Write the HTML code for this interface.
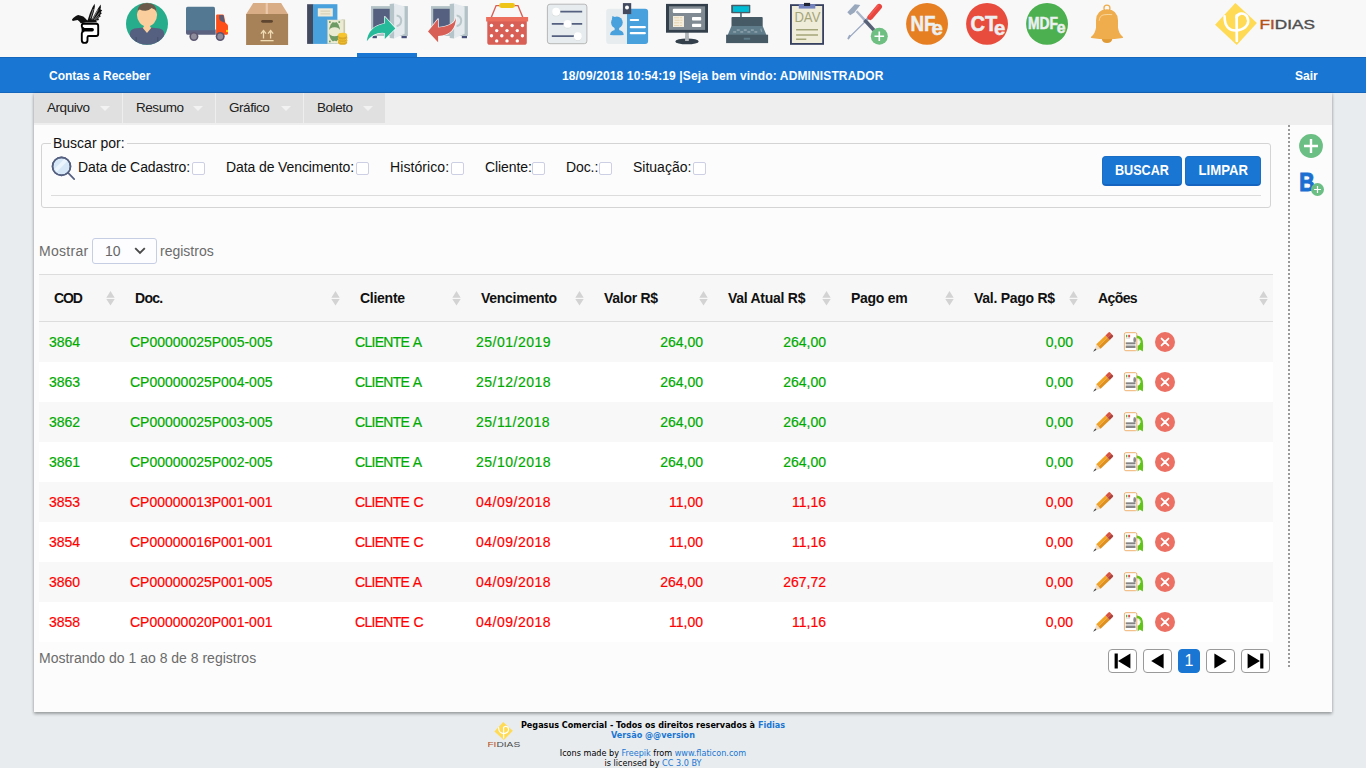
<!DOCTYPE html>
<html lang="pt-br">
<head>
<meta charset="utf-8">
<title>Contas a Receber</title>
<style>
*{box-sizing:border-box}
html,body{margin:0;padding:0}
body{width:1366px;height:768px;overflow:hidden;position:relative;background:#e8ecef;
  font-family:"Liberation Sans",sans-serif;font-size:14px;color:#111}
a{text-decoration:none;color:#1976d2}

/* ---------- top toolbar ---------- */
#toolbar{position:absolute;left:0;top:0;width:1366px;height:57px;background:#f8f8f8}
#toolbar .ic{position:absolute;top:0;width:60px;height:57px}
#toolbar .ic svg{position:absolute;left:0;top:0;width:60px;height:57px}
#toolbar .ic.active:after{content:"";position:absolute;left:0;right:0;bottom:0;height:4px;background:#1976d2}
#brand{position:absolute;left:1206px;top:0;width:120px;height:57px}
#brand svg{position:absolute;left:0;top:0;width:120px;height:57px}

/* ---------- blue title bar ---------- */
#titlebar{position:absolute;left:0;top:57px;width:1366px;height:36px;background:#1976d2;color:#fff;
  font-weight:bold;font-size:12px;line-height:36px;box-shadow:inset 0 1px 0 #1567be,inset 0 -1px 0 #1567be}
#titlebar span{position:absolute;top:1px;white-space:nowrap}
#tb-left{left:49px}
#tb-mid{left:562px;letter-spacing:.13px}
#tb-right{left:1295px}

/* ---------- main panel ---------- */
#panel{position:absolute;left:34px;top:93px;width:1298px;height:619px;background:#fcfcfc;
  box-shadow:0 2px 3px rgba(0,0,0,.3),0 0 3px rgba(0,0,0,.14)}
#menubar{position:absolute;left:0;top:0;width:1298px;height:32px;background:#eeeeee}
#menubar .mi{position:absolute;top:0;height:30px;background:#e0e0e0;line-height:29px;color:#212121;font-size:13.5px;letter-spacing:-.45px;padding-left:13px;white-space:nowrap}
#menubar .mi i{position:absolute;top:13px;width:0;height:0;border-left:5px solid transparent;border-right:5px solid transparent;border-top:5px solid #f2f2f2}

/* ---------- search fieldset ---------- */
#busca{position:absolute;left:7px;top:50px;width:1230px;height:65px;margin:0;padding:0;border:1px solid #d4d4d4;border-radius:3px}
#busca legend{position:absolute;left:9px;top:-9px;padding:0 2px;background:#fcfcfc;font-size:14px;line-height:16px;color:#111;white-space:nowrap}
#busca .lb{position:absolute;top:15px;line-height:16px;white-space:nowrap;color:#111;letter-spacing:-.1px}
#busca .cb{position:absolute;top:18px;width:13px;height:13px;border:1px solid #cdd0e4;border-radius:2px;background:#fff}
#busca hr{position:absolute;left:9px;top:51px;width:1210px;height:0;margin:0;border:0;border-top:1px solid #dcdcdc}
.btn{position:absolute;top:12px;height:30px;background:#1976d2;color:#fff;font-weight:bold;font-size:14px;line-height:26px;text-align:center;border-radius:4px;border:1px solid #1a6fc4;border-bottom:2px solid #1565c0;white-space:nowrap}

/* ---------- side tools ---------- */
#vline{position:absolute;left:1254px;top:32px;width:0;height:542px;border-left:2px dotted #9a9a9a}
#side-add{position:absolute;left:1265px;top:41px;width:24px;height:24px}
#side-b{position:absolute;left:1264px;top:76px;width:28px;height:28px}

/* ---------- length / info ---------- */
.gray{color:#6b6b6b}
#len{position:absolute;left:5px;top:145px;width:300px;height:26px;line-height:26px;white-space:nowrap}
#len b{position:absolute;top:0;font-weight:normal}
#len .sel{position:absolute;left:53px;top:0;width:65px;height:26px;border:1px solid #c6cee4;border-radius:3px;background:#fdfdff;line-height:24px;padding-left:12px;color:#666}
#info{position:absolute;left:5px;top:556px;line-height:18px;white-space:nowrap}

/* ---------- data table ---------- */
#grid{position:absolute;left:5px;top:181px;width:1234px;border-collapse:collapse;table-layout:fixed;font-size:14px}
#grid th{height:47px;font-size:14px;letter-spacing:-.27px;padding:0 0 0 15px;text-align:left;font-weight:bold;color:#111;background:#f7f7f7;border-top:1px solid #dddddd;border-bottom:1px solid #dddddd;position:relative;white-space:nowrap}
#grid td{height:40px;padding:1px 10px 0;white-space:nowrap;overflow:hidden}
#grid tr.odd td{background:#f8f8f8}
#grid tr.even td{background:#fff}
#grid td.r{text-align:right}
#grid td{-webkit-text-stroke:.2px currentColor}
#grid td:nth-child(3){letter-spacing:-.72px;word-spacing:1.2px}
#grid td:nth-child(4){letter-spacing:.5px}
#grid tr.g td{color:#00aa00}
#grid tr.v td{color:#ff0000}
#grid td.a{padding:0 0 0 7px}
#grid td.a svg{display:block;width:90px;height:24px}
#grid th .s{position:absolute;right:5px;top:16px;width:9px;height:15px}

/* ---------- pagination ---------- */
.pg{position:absolute;top:556px;height:24px;border:1px solid #9a9a9a;border-radius:4px;background:#fff}
.pg.cur{border-color:#1976d2;background:#1976d2;color:#fff;text-align:center;line-height:22px;font-size:16px}

/* ---------- footer ---------- */
.ft{position:absolute;left:403px;width:500px;text-align:center;font-family:"DejaVu Sans Condensed","DejaVu Sans",sans-serif;font-size:9px;line-height:10px;color:#000;white-space:nowrap}
#footer{top:720px}
#footer2{top:748px}
.ft b{font-weight:bold}
#flogo{position:absolute;left:484px;top:719px;width:40px;height:32px}
#flogo svg{display:block;width:40px;height:32px}
.btn span{display:inline-block;transform-origin:50% 50%}
#grid th:nth-child(1){letter-spacing:-1.1px}
#grid th:nth-child(2){letter-spacing:-.7px}
#grid th:nth-child(9){letter-spacing:-.6px}
</style>
</head>
<body>

<div id="toolbar">
  <div class="ic" style="left:57px"><svg viewBox="0 0 60 57"><path d="M14.9 19.8 L16.2 18 L18.9 16 L21.1 14.9 L23 15.5 L26.3 16.5 L28.5 18.4 L30.3 20.4 L30.9 19.4 L32.9 13.2 L35.6 7 L37.6 3.7 L37.9 6.6 L36.9 11.4 L35.2 17 L34.5 19.6 L35.2 18.8 L37.8 14 L41.3 7.9 L43.7 4.6 L43.9 7.5 L43.4 9.2 L45.2 10.4 L43.7 11.9 L44.8 13.2 L43 14.9 L43.7 16.5 L41.3 18 L42 20 L38.8 20.8 L40.4 22.2 L35 22.4 L29 22.4 L23.7 23.2 L22.4 21.5 L20.6 20 L18 20.4 L15.8 20.9 Z" fill="#111"/><path d="M33.2 18.4 L36.4 9 M35.6 19.4 L41.2 9.6 M37.2 19.8 L42.6 12.6 M38.6 19.8 L42.2 16" stroke="#f8f8f8" stroke-width=".45" fill="none"/><path d="M26.4 23.7 H39.2 Q41.2 23.7 41.2 25.7 V34 Q41.2 36 39.2 36 H31.8 Q30.5 36 30.5 37.3 V40.2 Q30.5 42.9 27.8 42.9 H27.5 Q24.8 42.9 24.8 40.2 V33.6 Q24.8 31.7 26.4 31.4 V28.2 Q24.8 27.9 24.8 26.3 V25.7 Q24.8 23.7 26.4 23.7 Z" fill="#fff" stroke="#000" stroke-width="1.9" stroke-linejoin="round"/><path d="M24.6 27.9 H35.2 Q36.9 27.9 36.9 29.7 Q36.9 31.5 35.2 31.5 H24.6 Z" fill="#000"/></svg></div>
  <div class="ic" style="left:117px"><svg viewBox="0 0 60 57"><defs><clipPath id="c2"><circle cx="30" cy="23.8" r="21"/></clipPath></defs><circle cx="30" cy="23.8" r="21" fill="#26ad8b"/><g clip-path="url(#c2)"><path d="M13 46 V33.5 Q13 29.5 17.5 28.6 L26.5 27.6 H33.5 L42.5 28.6 Q47 29.5 47 33.5 V46 Z" fill="#556080"/><path d="M19.2 37 V46 M40.8 37 V46" stroke="#48516f" stroke-width="1.3"/><path d="M26.8 22 H33.2 V27 L34.4 27.7 L30 33 L25.6 27.7 L26.8 27 Z" fill="#fbce9d"/><ellipse cx="30" cy="14.8" rx="10.1" ry="11.6" fill="#fbce9d"/><path d="M20.2 12.4 Q20.6 3 30 3 Q39.4 3 39.8 12.4 Q38.6 9.4 34.6 8 Q32 10.6 28.6 10.8 Q24.6 10.8 22.6 9.4 Q20.8 10.4 20.2 12.4 Z" fill="#6b5b4b"/></g></svg></div>
  <div class="ic" style="left:177px"><svg viewBox="0 0 60 57"><path d="M9 29.6 H38.7 V34.7 H10.6 Q9 34.7 9 33.1 Z" fill="#5b6280"/><path d="M10.6 6.8 H36.4 Q38 6.8 38 8.4 V30.2 H9 V8.4 Q9 6.8 10.6 6.8 Z" fill="#527892"/><path d="M39.1 15.6 Q39.1 14.5 40.2 14.5 H45.6 Q46.7 14.5 47 15.6 L48.3 22.4 L50.3 24.6 Q51 25.4 51 26.4 V33.6 Q51 34.7 49.9 34.7 H39.1 Z" fill="#ff4f19"/><path d="M42.2 15 H45.6 Q46.4 15 46.6 15.8 L47.9 22.8 L44.2 21.2 Q42.2 20.4 42.2 18.6 Z" fill="#5d5a73"/><rect x="49" y="29.9" width="2" height="2.2" fill="#ffcf00"/><circle cx="16.9" cy="36.5" r="4.5" fill="#5b5670"/><circle cx="16.9" cy="36.5" r="2.9" fill="#8f8c9c"/><circle cx="43.2" cy="36.5" r="4.5" fill="#5b5670"/><circle cx="43.2" cy="36.5" r="2.9" fill="#8f8c9c"/></svg></div>
  <div class="ic" style="left:237px"><svg viewBox="0 0 60 57"><path d="M16.2 3.1 H44.1 L51.1 14.2 H9.1 Z" fill="#d9ae86"/><rect x="28.7" y="3.1" width="2.2" height="11.6" fill="#ecc9aa"/><rect x="9.1" y="14" width="42" height="31" fill="#a78157"/><rect x="24.2" y="20" width="11.7" height="2.7" rx="1.35" fill="#5f4630"/><path d="M26.5 30.6 V38.5 M33.6 30.6 V38.5" stroke="#f0dcb4" stroke-width="1.3" fill="none"/><path d="M23.9 33.6 L26.5 30.5 L29.1 33.6 M31 33.6 L33.6 30.5 L36.2 33.6" stroke="#f0dcb4" stroke-width="1.3" fill="none" stroke-linejoin="miter"/><rect x="23.5" y="40" width="13.1" height="1.3" fill="#f0dcb4"/></svg></div>
  <div class="ic" style="left:297px"><svg viewBox="0 0 60 57"><rect x="10.1" y="4.2" width="6.2" height="39.7" fill="#424a60"/><rect x="16" y="4.2" width="24.4" height="39.7" fill="#48a0dc"/><rect x="20.8" y="8.3" width="15" height="8.2" fill="#efe9d8"/><path d="M23.5 11.2 H33.2 M23.5 13.8 H33.2" stroke="#d9d2b9" stroke-width="1.3"/><rect x="44.6" y="19.5" width="3.5" height="23.6" fill="#c9c8a9"/><rect x="30.7" y="20" width="15.9" height="23.6" fill="#ebebd3" stroke="#d4d4ba" stroke-width=".5"/><ellipse cx="37.6" cy="31.7" rx="5.5" ry="10.3" fill="#6e9a64"/><ellipse cx="37.6" cy="31.7" rx="6" ry="4.5" fill="#ebebd3"/><ellipse cx="37.6" cy="21.4" rx="1.5" ry="1.2" fill="#ebebd3"/><ellipse cx="37.6" cy="42" rx="1.5" ry="1.2" fill="#ebebd3"/><rect x="32" y="21.2" width="1.7" height="1.7" fill="#6e9a64"/><rect x="41.4" y="21.2" width="1.7" height="1.7" fill="#6e9a64"/><rect x="32" y="40.6" width="1.7" height="1.7" fill="#6e9a64"/><path d="M41.1 35.1 V42.4 A4.5 2.4 0 0 0 50.1 42.4 V35.1 Z" fill="#dba926"/><path d="M41.1 37.6 A4.5 2.4 0 0 0 50.1 37.6 M41.1 40 A4.5 2.4 0 0 0 50.1 40" stroke="#f4c233" stroke-width="1" fill="none"/><ellipse cx="45.6" cy="35.1" rx="4.5" ry="2.4" fill="#f6c42f"/></svg></div>
  <div class="ic active" style="left:357px"><svg viewBox="0 0 60 57"><rect x="15.5" y="36" width="4.4" height="2.2" fill="#47507a"/><rect x="44.5" y="36" width="5.3" height="2.2" fill="#47507a"/><rect x="14" y="6.1" width="36.9" height="29.9" fill="#b3c2c6"/><rect x="16.2" y="8.8" width="17" height="24.6" fill="#556080"/><path d="M32.7 4 L37.1 3.5 V38.6 L32.7 37.9 Z" fill="#b5c4c8"/><path d="M37.1 3.5 L47.6 6.6 V33.8 L37.1 38.6 Z" fill="#e4eaed"/><path d="M39.6 15.4 Q44.2 16 44.2 20.6 Q44.2 25.4 39.6 26.2" stroke="#b9c7cb" stroke-width="2" fill="none"/><path d="M9.8 41.3 Q11.5 26.5 27.8 23.6 V16.7 L38.4 28.5 L27.8 39.1 V33 Q17 31.6 9.8 41.3 Z" fill="#26b99a" stroke="#f8f8f8" stroke-width="1.4" stroke-linejoin="round" paint-order="stroke"/></svg></div>
  <div class="ic" style="left:417px"><svg viewBox="0 0 60 57"><rect x="44.8" y="36" width="5.2" height="2.2" fill="#47507a"/><rect x="14" y="6.1" width="36.9" height="29.9" fill="#b3c2c6"/><rect x="16.2" y="8.8" width="17" height="24.6" fill="#556080"/><path d="M32.7 4 L37.1 3.5 V38.6 L32.7 37.9 Z" fill="#b5c4c8"/><path d="M37.1 3.5 L47.6 6.6 V33.8 L37.1 38.6 Z" fill="#e4eaed"/><path d="M39.6 15.4 Q44.2 16 44.2 20.6 Q44.2 25.4 39.6 26.2" stroke="#b9c7cb" stroke-width="2" fill="none"/><path d="M39.1 17.1 Q38.2 26 21.1 27.6 V18.9 L11 31.6 L21.1 42.2 V36 Q38.6 35.6 39.1 17.1 Z" fill="#d75f56" stroke="#f8f8f8" stroke-width="1.4" stroke-linejoin="round" paint-order="stroke"/></svg></div>
  <div class="ic" style="left:477px"><svg viewBox="0 0 60 57"><path d="M13.4 19.4 L19.1 5.6 H41 L46.7 19.4" stroke="#d75f56" stroke-width="1.4" fill="none"/><rect x="22.1" y="3.1" width="15.9" height="4.8" rx="2.4" fill="#efc419"/><path d="M10.3 21 H49.8 V42.2 Q49.8 44.8 47.2 44.8 H12.9 Q10.3 44.8 10.3 42.2 Z" fill="#d75f56"/><rect x="9.1" y="17" width="42" height="4.5" fill="#ec6f5e"/><g fill="#fff"><circle cx="14.5" cy="25.5" r="1.7"/><circle cx="24.8" cy="25.5" r="1.7"/><circle cx="35.1" cy="25.5" r="1.7"/><circle cx="45.4" cy="25.5" r="1.7"/><circle cx="19.7" cy="30.6" r="1.7"/><circle cx="30" cy="30.6" r="1.7"/><circle cx="40.3" cy="30.6" r="1.7"/><circle cx="14.5" cy="35.8" r="1.7"/><circle cx="24.8" cy="35.8" r="1.7"/><circle cx="35.1" cy="35.8" r="1.7"/><circle cx="45.4" cy="35.8" r="1.7"/><circle cx="19.7" cy="40.9" r="1.7"/><circle cx="30" cy="40.9" r="1.7"/><circle cx="40.3" cy="40.9" r="1.7"/></g></svg></div>
  <div class="ic" style="left:537px"><svg viewBox="0 0 60 57"><rect x="10.4" y="4.2" width="39.5" height="39.5" rx="2.6" fill="#e7edee" stroke="#b0b0b0" stroke-width=".9"/><path d="M23.3 11.7 H45.2 M14.8 23.9 H45.2 M14.8 36.2 H36.9" stroke="#556080" stroke-width="1.8"/><g fill="#d6d9da"><circle cx="19.1" cy="12.4" r="3.95"/><circle cx="30.6" cy="24.5" r="3.95"/><circle cx="40.85" cy="36.8" r="3.95"/></g><g fill="#fff"><circle cx="19.1" cy="11.8" r="3.95"/><circle cx="30.6" cy="23.9" r="3.95"/><circle cx="40.85" cy="36.2" r="3.95"/></g></svg></div>
  <div class="ic" style="left:597px"><svg viewBox="0 0 60 57"><path d="M12.1 8.8 H30 V43.9 H12.1 Q9.1 43.9 9.1 40.9 V11.8 Q9.1 8.8 12.1 8.8 Z" fill="#e7edee"/><path d="M30 8.8 H48.1 Q51.1 8.8 51.1 11.8 V40.9 Q51.1 43.9 48.1 43.9 H30 Z" fill="#48a0dc"/><rect x="25.9" y="3.1" width="8.3" height="11" fill="#424a60"/><circle cx="30" cy="7.5" r="2" fill="#fff"/><g fill="#48a0dc"><ellipse cx="19.9" cy="22.5" rx="5.8" ry="6.1"/><path d="M14.9 19.4 L15.4 16 L19 17.4 Z"/><rect x="17.6" y="27" width="4.6" height="4"/><path d="M13.1 34.9 Q13.1 30 19.9 30 Q26.7 30 26.7 34.9 Q19.9 35.6 13.1 34.9 Z"/></g><path d="M33.8 20 H41.1 M33.8 27.2 H47.8 M33.8 33.2 H47.8" stroke="#fff" stroke-width="2.2" stroke-linecap="round"/></svg></div>
  <div class="ic" style="left:657px"><svg viewBox="0 0 60 57"><rect x="28.1" y="32" width="3.7" height="9.6" fill="#b0b5b9"/><ellipse cx="30" cy="41.4" rx="11.7" ry="2.95" fill="#333f4a"/><rect x="28.1" y="36" width="3.7" height="5" fill="#b0b5b9"/><rect x="9" y="3.9" width="42" height="28.8" fill="#333f4a"/><rect x="12" y="6.3" width="36.1" height="23.6" fill="#7f8a92"/><rect x="15.8" y="8.8" width="28.4" height="4.2" rx="1" fill="#fff"/><rect x="16" y="16" width="11" height="11" fill="#f4ecdc"/><path d="M17 17.7 H26 M17.6 20.3 H25.4 M17 22.8 H26 M17 25.5 H26" stroke="#e0cba0" stroke-width=".7" stroke-dasharray="5 .8 2.2 1"/><rect x="35" y="17.1" width="9.2" height="3.5" rx=".8" fill="#fff"/><rect x="35" y="23.7" width="9.2" height="3.4" rx=".8" fill="#fff"/></svg></div>
  <div class="ic" style="left:717px"><svg viewBox="0 0 60 57"><rect x="23" y="12.6" width="1.9" height="5" fill="#607d8b"/><rect x="14.2" y="4.8" width="19.1" height="8.4" rx=".8" fill="#4a5a65"/><rect x="16" y="6.2" width="16.1" height="5.7" fill="#00bcd4"/><path d="M15.3 17.1 H44.9 Q45.7 17.1 45.7 17.9 V26.2 H14.5 V17.9 Q14.5 17.1 15.3 17.1 Z" fill="#465a65"/><path d="M14.5 25.9 H45.7 L49.4 35.1 H10.7 Z" fill="#5f7c8a"/><g fill="#8fa3ad"><rect x="16.2" y="31.2" width="2.9" height="1.5"/><rect x="19.8" y="29.3" width="2.9" height="1.5"/><rect x="23.3" y="31.2" width="2.9" height="1.5"/><rect x="26.8" y="29.3" width="2.9" height="1.5"/><rect x="30.4" y="31.2" width="2.9" height="1.5"/><rect x="33.9" y="29.3" width="2.9" height="1.5"/><rect x="37.4" y="31.2" width="2.9" height="1.5"/><path d="M43.2 28.8 L44.4 28.6 L45.3 31.6 L44.1 31.9 Z"/></g><rect x="9.1" y="34.7" width="42" height="8.4" fill="#465a65"/><rect x="26.8" y="37.8" width="6.3" height="1.9" fill="#5f7c8a"/></svg></div>
  <div class="ic" style="left:777px"><svg viewBox="0 0 60 57"><rect x="13" y="4.2" width="34" height="40.6" fill="#36405f"/><rect x="14.9" y="6" width="30.3" height="37" fill="#efecd9"/><rect x="21.8" y="4.2" width="16.5" height="4.4" fill="#7383bf"/><rect x="27" y="2.9" width="6.1" height="3.1" fill="#1f2535"/><text x="17.4" y="22.4" font-family="Liberation Sans, sans-serif" font-size="14.6" fill="#a5a57a" textLength="26" lengthAdjust="spacingAndGlyphs">DAV</text><path d="M19.1 29.7 H41 M19.1 34.9 H41 M19.1 39.3 H29.3" stroke="#a5a57a" stroke-width="1.5"/></svg></div>
  <div class="ic" style="left:837px"><svg viewBox="0 0 60 57"><path d="M30.6 19.3 L12 37.6" stroke="#9aa8c2" stroke-width="1.3" stroke-linecap="round"/><path d="M12.8 35.8 L11.4 38.4" stroke="#9aa8c2" stroke-width="2" stroke-linecap="round"/><path d="M19.6 11.2 L28.2 20.6" stroke="#a9b5c9" stroke-width="2.3"/><path d="M27.6 20 L38 31.4" stroke="#566076" stroke-width="3.6"/><path d="M17.8 4.2 L23.3 5.1 L17.4 12.4 L13.2 15.2 L10.3 12.3 Z" fill="#9aa8bd"/><path d="M29 18.6 L31.4 16.2 L33.2 18.2 L30.2 20.8 Z" fill="#8fa0bd"/><path d="M42.2 6.6 L33.2 17.2" stroke="#e8453f" stroke-width="5.6" stroke-linecap="round"/><path d="M41.2 5.6 L32.4 16" stroke="#f25a52" stroke-width="1.6" stroke-linecap="round"/><circle cx="42.3" cy="36.3" r="8.5" fill="#6fbf83"/><path d="M37.5 36.3 H47.1 M42.3 31.5 V41.1" stroke="#fff" stroke-width="1.6"/></svg></div>
  <div class="ic" style="left:897px"><svg viewBox="0 0 60 57"><circle cx="30.05" cy="23.9" r="20.95" fill="#e67e22"/><text x="13.4" y="30.7" font-size="21.4" textLength="25" lengthAdjust="spacingAndGlyphs" font-family="Liberation Sans, sans-serif" font-weight="bold" fill="#ecf0f1" stroke="#ecf0f1" stroke-width=".5">NF</text><text x="34.6" y="35.4" font-size="20.4" font-family="Liberation Sans, sans-serif" font-weight="bold" fill="#ecf0f1" stroke="#ecf0f1" stroke-width=".5">e</text></svg></div>
  <div class="ic" style="left:957px"><svg viewBox="0 0 60 57"><circle cx="30.05" cy="23.9" r="20.95" fill="#e74c3c"/><text x="13.4" y="30.7" font-size="21.4" textLength="26.8" lengthAdjust="spacingAndGlyphs" font-family="Liberation Sans, sans-serif" font-weight="bold" fill="#ecf0f1" stroke="#ecf0f1" stroke-width=".5">CT</text><text x="36.9" y="35.4" font-size="20.4" font-family="Liberation Sans, sans-serif" font-weight="bold" fill="#ecf0f1" stroke="#ecf0f1" stroke-width=".5">e</text></svg></div>
  <div class="ic" style="left:1017px"><svg viewBox="0 0 60 57"><circle cx="30.05" cy="23.9" r="20.95" fill="#4caf50"/><text x="10.9" y="29.4" font-size="16.2" textLength="30" lengthAdjust="spacingAndGlyphs" font-family="Liberation Sans, sans-serif" font-weight="bold" fill="#ecf0f1" stroke="#ecf0f1" stroke-width=".5">MDF</text><text x="39.7" y="33.1" font-size="15.8" font-family="Liberation Sans, sans-serif" font-weight="bold" fill="#ecf0f1" stroke="#ecf0f1" stroke-width=".5">e</text></svg></div>
  <div class="ic" style="left:1077px"><svg viewBox="0 0 60 57"><circle cx="29.95" cy="8.2" r="3" fill="none" stroke="#efad4d" stroke-width="1.3"/><path d="M24.8 39 H35.3 Q34.6 43.1 30 43.1 Q25.4 43.1 24.8 39 Z" fill="#e09a35"/><path d="M30 9.2 Q40.6 9.6 41 20.4 V27.4 Q41.6 33.2 46 37 Q46.4 37.8 45.4 38 Q30 40.4 14.6 38 Q13.6 37.8 14 37 Q18.4 33.2 19 27.4 V20.4 Q19.4 9.6 30 9.2 Z" fill="#efad4d"/><path d="M22.2 20.4 Q22.6 15.4 27 14.8 Q31 14.2 34.8 14.6" stroke="#f8d9a3" stroke-width=".9" fill="none" stroke-linecap="round"/></svg></div>
  <div id="brand"><svg viewBox="0 0 120 57"><path d="M29.4 3.1 L50.9 23 L30.8 45 L9.1 24.8 Z" fill="#ffdb55"/><path d="M18.6 16.4 Q18.6 24 22 27.6 Q25.6 31.2 31.4 30.4 Q38.6 29.4 41.4 24.4 Q43.2 20.4 41 16.6 Q38.6 13.2 34.8 13.6 Q31.4 14.2 30.6 17.4" fill="none" stroke="#fff" stroke-width="2.6" stroke-linecap="round"/><path d="M30.6 15.6 L30.8 41" stroke="#fff" stroke-width="2.7" stroke-linecap="round"/><text x="53.6" y="28.5" font-family="Liberation Sans, sans-serif" font-size="12.6" textLength="55.4" lengthAdjust="spacingAndGlyphs" stroke-width=".35"><tspan fill="#b5501a" stroke="#b5501a">FI</tspan><tspan fill="#4d4d4d" stroke="#4d4d4d">DIAS</tspan></text></svg></div>
</div>

<div id="titlebar">
  <span id="tb-left">Contas a Receber</span>
  <span id="tb-mid">18/09/2018 10:54:19 |Seja bem vindo: ADMINISTRADOR</span>
  <span id="tb-right">Sair</span>
</div>

<div id="panel">
  <div id="menubar">
    <div class="mi" style="left:0;width:88px">Arquivo<i style="left:66px"></i></div>
    <div class="mi" style="left:89px;width:92px">Resumo<i style="left:70px"></i></div>
    <div class="mi" style="left:182px;width:87px">Gráfico<i style="left:65px"></i></div>
    <div class="mi" style="left:270px;width:81px">Boleto<i style="left:59px"></i></div>
  </div>

  <fieldset id="busca">
    <legend>Buscar por:</legend>
    <svg style="position:absolute;left:8px;top:10px;width:26px;height:28px" viewBox="0 0 26 28"><circle cx="11.5" cy="12.4" r="9" fill="#d6e8f8" stroke="#556080" stroke-width="1.6"/><path d="M4.8 14.8 L14.2 5 L17.4 7 L6.6 18 Z" fill="#ecf5fd"/><circle cx="11.5" cy="12.4" r="9" fill="none" stroke="#556080" stroke-width="1.6"/><path d="M17.9 18.7 L24.2 25.1" stroke="#556080" stroke-width="1.7" stroke-linecap="round"/></svg>
    <span class="lb" style="left:36px">Data de Cadastro:</span><span class="cb" style="left:150px"></span>
    <span class="lb" style="left:184px">Data de Vencimento:</span><span class="cb" style="left:314px"></span>
    <span class="lb" style="left:348px;letter-spacing:.08px">Histórico:</span><span class="cb" style="left:409px"></span>
    <span class="lb" style="left:443px">Cliente:</span><span class="cb" style="left:490px"></span>
    <span class="lb" style="left:524px">Doc.:</span><span class="cb" style="left:557px"></span>
    <span class="lb" style="left:591px;letter-spacing:0">Situação:</span><span class="cb" style="left:651px"></span>
    <div class="btn" style="left:1060px;width:80px"><span style="transform:scaleX(.9)">BUSCAR</span></div>
    <div class="btn" style="left:1143px;width:76px"><span style="transform:scaleX(.94)">LIMPAR</span></div>
    <hr>
  </fieldset>

  <div id="vline"></div>
  <div id="side-add"><svg viewBox="0 0 24 24" style="display:block;width:24px;height:24px"><circle cx="12" cy="12" r="11.9" fill="#6cbf84"/><path d="M5 12 H19 M12 5 V19" stroke="#fff" stroke-width="2.4"/></svg></div>
  <div id="side-b"><svg viewBox="0 0 28 28" style="display:block;width:28px;height:28px"><text x="1.2" y="21.6" font-family="Liberation Sans, sans-serif" font-weight="bold" font-size="26" fill="#1b6fd1" stroke="#1b6fd1" stroke-width="1.1" textLength="15.4" lengthAdjust="spacingAndGlyphs">B</text><circle cx="19.5" cy="20.5" r="6.5" fill="#6cbf84"/><path d="M16.1 20.5 H22.9 M19.5 17.1 V23.9" stroke="#fff" stroke-width="1.2"/></svg></div>

  <div id="len" class="gray"><b style="left:0;letter-spacing:.3px">Mostrar</b><span class="sel">10<svg style="position:absolute;left:41px;top:8px;width:12px;height:8px" viewBox="0 0 12 8"><path d="M1.2 1.2 L6 6 L10.8 1.2" fill="none" stroke="#4a4a4a" stroke-width="1.9"/></svg></span><b style="left:121px">registros</b></div>

  <table id="grid">
    <colgroup><col style="width:81px"><col style="width:225px"><col style="width:121px"><col style="width:123px"><col style="width:124px"><col style="width:123px"><col style="width:123px"><col style="width:124px"><col style="width:190px"></colgroup>
    <thead><tr>
      <th>COD<svg class="s" viewBox="0 0 9 15"><path d="M.3 6.7 L4.5 0 L8.7 6.7 Z M.3 8.1 L4.5 14.6 L8.7 8.1 Z" fill="#d3d3d3"/></svg></th><th>Doc.<svg class="s" viewBox="0 0 9 15"><path d="M.3 6.7 L4.5 0 L8.7 6.7 Z M.3 8.1 L4.5 14.6 L8.7 8.1 Z" fill="#d3d3d3"/></svg></th><th>Cliente<svg class="s" viewBox="0 0 9 15"><path d="M.3 6.7 L4.5 0 L8.7 6.7 Z M.3 8.1 L4.5 14.6 L8.7 8.1 Z" fill="#d3d3d3"/></svg></th><th>Vencimento<svg class="s" viewBox="0 0 9 15"><path d="M.3 6.7 L4.5 0 L8.7 6.7 Z M.3 8.1 L4.5 14.6 L8.7 8.1 Z" fill="#d3d3d3"/></svg></th><th>Valor R$<svg class="s" viewBox="0 0 9 15"><path d="M.3 6.7 L4.5 0 L8.7 6.7 Z M.3 8.1 L4.5 14.6 L8.7 8.1 Z" fill="#d3d3d3"/></svg></th><th>Val Atual R$<svg class="s" viewBox="0 0 9 15"><path d="M.3 6.7 L4.5 0 L8.7 6.7 Z M.3 8.1 L4.5 14.6 L8.7 8.1 Z" fill="#d3d3d3"/></svg></th><th>Pago em<svg class="s" viewBox="0 0 9 15"><path d="M.3 6.7 L4.5 0 L8.7 6.7 Z M.3 8.1 L4.5 14.6 L8.7 8.1 Z" fill="#d3d3d3"/></svg></th><th>Val. Pago R$<svg class="s" viewBox="0 0 9 15"><path d="M.3 6.7 L4.5 0 L8.7 6.7 Z M.3 8.1 L4.5 14.6 L8.7 8.1 Z" fill="#d3d3d3"/></svg></th><th>Ações<svg class="s" viewBox="0 0 9 15"><path d="M.3 6.7 L4.5 0 L8.7 6.7 Z M.3 8.1 L4.5 14.6 L8.7 8.1 Z" fill="#d3d3d3"/></svg></th>
    </tr></thead>
    <tbody>
      <tr class="odd g"><td>3864</td><td>CP00000025P005-005</td><td>CLIENTE A</td><td>25/01/2019</td><td class="r">264,00</td><td class="r">264,00</td><td></td><td class="r">0,00</td><td class="a"><svg class="act" viewBox="0 0 90 24"><g transform="translate(3.1 21.7) rotate(-44)"><path d="M0 0 L4 -1 V1 Z" fill="#444"/><path d="M4 -1 L7.4 -3.1 V3.1 L4 1 Z" fill="#f0dcc0"/><rect x="7.4" y="-3.1" width="12.8" height="3.1" fill="#f2a324"/><rect x="7.4" y="0" width="12.8" height="3.1" fill="#e0901f"/><path d="M20.2 -3.1 H24.4 Q25.6 -3.1 25.6 -1.9 V0 H20.2 Z" fill="#d9513f"/><path d="M20.2 0 H25.6 V1.9 Q25.6 3.1 24.4 3.1 H20.2 Z" fill="#b2413a"/></g><rect x="34.4" y="2.7" width="12.4" height="18" rx="1.4" fill="#fff" stroke="#f0b070" stroke-width="1"/><rect x="36" y="4.8" width="1.3" height="2.6" fill="#58b058"/><rect x="38.2" y="4.8" width="1.9" height="2.6" fill="#e45050"/><rect x="36" y="7.9" width="4" height=".9" fill="#ddd"/><ellipse cx="44.7" cy="9.8" rx="1.4" ry="2.7" fill="#8a8a8a"/><rect x="35.7" y="12.4" width="9.8" height="1.5" fill="#777"/><rect x="35.7" y="14.3" width="9.8" height="1.7" fill="#c4c4c4"/><rect x="35.7" y="16.3" width="9.8" height="1.4" fill="#555"/><path d="M46.8 5.6 Q51.6 5.8 52.8 11 Q53.6 15.6 52.8 21.6 L49.8 19.6 L47.6 21.4 L47.8 15.4 Q49.8 15.6 50.2 12.6 Q50.2 9 46.8 8 Z" fill="#62c41a"/><path d="M48.4 8.4 Q50.8 9.8 50.6 12.8" stroke="#c3ea9a" stroke-width=".9" fill="none"/><circle cx="75" cy="12" r="10" fill="#ec7063"/><path d="M71.6 8.6 L78.4 15.4 M78.4 8.6 L71.6 15.4" stroke="#fff" stroke-width="1.9" stroke-linecap="round"/></svg></td></tr>
      <tr class="even g"><td>3863</td><td>CP00000025P004-005</td><td>CLIENTE A</td><td>25/12/2018</td><td class="r">264,00</td><td class="r">264,00</td><td></td><td class="r">0,00</td><td class="a"><svg class="act" viewBox="0 0 90 24"><g transform="translate(3.1 21.7) rotate(-44)"><path d="M0 0 L4 -1 V1 Z" fill="#444"/><path d="M4 -1 L7.4 -3.1 V3.1 L4 1 Z" fill="#f0dcc0"/><rect x="7.4" y="-3.1" width="12.8" height="3.1" fill="#f2a324"/><rect x="7.4" y="0" width="12.8" height="3.1" fill="#e0901f"/><path d="M20.2 -3.1 H24.4 Q25.6 -3.1 25.6 -1.9 V0 H20.2 Z" fill="#d9513f"/><path d="M20.2 0 H25.6 V1.9 Q25.6 3.1 24.4 3.1 H20.2 Z" fill="#b2413a"/></g><rect x="34.4" y="2.7" width="12.4" height="18" rx="1.4" fill="#fff" stroke="#f0b070" stroke-width="1"/><rect x="36" y="4.8" width="1.3" height="2.6" fill="#58b058"/><rect x="38.2" y="4.8" width="1.9" height="2.6" fill="#e45050"/><rect x="36" y="7.9" width="4" height=".9" fill="#ddd"/><ellipse cx="44.7" cy="9.8" rx="1.4" ry="2.7" fill="#8a8a8a"/><rect x="35.7" y="12.4" width="9.8" height="1.5" fill="#777"/><rect x="35.7" y="14.3" width="9.8" height="1.7" fill="#c4c4c4"/><rect x="35.7" y="16.3" width="9.8" height="1.4" fill="#555"/><path d="M46.8 5.6 Q51.6 5.8 52.8 11 Q53.6 15.6 52.8 21.6 L49.8 19.6 L47.6 21.4 L47.8 15.4 Q49.8 15.6 50.2 12.6 Q50.2 9 46.8 8 Z" fill="#62c41a"/><path d="M48.4 8.4 Q50.8 9.8 50.6 12.8" stroke="#c3ea9a" stroke-width=".9" fill="none"/><circle cx="75" cy="12" r="10" fill="#ec7063"/><path d="M71.6 8.6 L78.4 15.4 M78.4 8.6 L71.6 15.4" stroke="#fff" stroke-width="1.9" stroke-linecap="round"/></svg></td></tr>
      <tr class="odd g"><td>3862</td><td>CP00000025P003-005</td><td>CLIENTE A</td><td>25/11/2018</td><td class="r">264,00</td><td class="r">264,00</td><td></td><td class="r">0,00</td><td class="a"><svg class="act" viewBox="0 0 90 24"><g transform="translate(3.1 21.7) rotate(-44)"><path d="M0 0 L4 -1 V1 Z" fill="#444"/><path d="M4 -1 L7.4 -3.1 V3.1 L4 1 Z" fill="#f0dcc0"/><rect x="7.4" y="-3.1" width="12.8" height="3.1" fill="#f2a324"/><rect x="7.4" y="0" width="12.8" height="3.1" fill="#e0901f"/><path d="M20.2 -3.1 H24.4 Q25.6 -3.1 25.6 -1.9 V0 H20.2 Z" fill="#d9513f"/><path d="M20.2 0 H25.6 V1.9 Q25.6 3.1 24.4 3.1 H20.2 Z" fill="#b2413a"/></g><rect x="34.4" y="2.7" width="12.4" height="18" rx="1.4" fill="#fff" stroke="#f0b070" stroke-width="1"/><rect x="36" y="4.8" width="1.3" height="2.6" fill="#58b058"/><rect x="38.2" y="4.8" width="1.9" height="2.6" fill="#e45050"/><rect x="36" y="7.9" width="4" height=".9" fill="#ddd"/><ellipse cx="44.7" cy="9.8" rx="1.4" ry="2.7" fill="#8a8a8a"/><rect x="35.7" y="12.4" width="9.8" height="1.5" fill="#777"/><rect x="35.7" y="14.3" width="9.8" height="1.7" fill="#c4c4c4"/><rect x="35.7" y="16.3" width="9.8" height="1.4" fill="#555"/><path d="M46.8 5.6 Q51.6 5.8 52.8 11 Q53.6 15.6 52.8 21.6 L49.8 19.6 L47.6 21.4 L47.8 15.4 Q49.8 15.6 50.2 12.6 Q50.2 9 46.8 8 Z" fill="#62c41a"/><path d="M48.4 8.4 Q50.8 9.8 50.6 12.8" stroke="#c3ea9a" stroke-width=".9" fill="none"/><circle cx="75" cy="12" r="10" fill="#ec7063"/><path d="M71.6 8.6 L78.4 15.4 M78.4 8.6 L71.6 15.4" stroke="#fff" stroke-width="1.9" stroke-linecap="round"/></svg></td></tr>
      <tr class="even g"><td>3861</td><td>CP00000025P002-005</td><td>CLIENTE A</td><td>25/10/2018</td><td class="r">264,00</td><td class="r">264,00</td><td></td><td class="r">0,00</td><td class="a"><svg class="act" viewBox="0 0 90 24"><g transform="translate(3.1 21.7) rotate(-44)"><path d="M0 0 L4 -1 V1 Z" fill="#444"/><path d="M4 -1 L7.4 -3.1 V3.1 L4 1 Z" fill="#f0dcc0"/><rect x="7.4" y="-3.1" width="12.8" height="3.1" fill="#f2a324"/><rect x="7.4" y="0" width="12.8" height="3.1" fill="#e0901f"/><path d="M20.2 -3.1 H24.4 Q25.6 -3.1 25.6 -1.9 V0 H20.2 Z" fill="#d9513f"/><path d="M20.2 0 H25.6 V1.9 Q25.6 3.1 24.4 3.1 H20.2 Z" fill="#b2413a"/></g><rect x="34.4" y="2.7" width="12.4" height="18" rx="1.4" fill="#fff" stroke="#f0b070" stroke-width="1"/><rect x="36" y="4.8" width="1.3" height="2.6" fill="#58b058"/><rect x="38.2" y="4.8" width="1.9" height="2.6" fill="#e45050"/><rect x="36" y="7.9" width="4" height=".9" fill="#ddd"/><ellipse cx="44.7" cy="9.8" rx="1.4" ry="2.7" fill="#8a8a8a"/><rect x="35.7" y="12.4" width="9.8" height="1.5" fill="#777"/><rect x="35.7" y="14.3" width="9.8" height="1.7" fill="#c4c4c4"/><rect x="35.7" y="16.3" width="9.8" height="1.4" fill="#555"/><path d="M46.8 5.6 Q51.6 5.8 52.8 11 Q53.6 15.6 52.8 21.6 L49.8 19.6 L47.6 21.4 L47.8 15.4 Q49.8 15.6 50.2 12.6 Q50.2 9 46.8 8 Z" fill="#62c41a"/><path d="M48.4 8.4 Q50.8 9.8 50.6 12.8" stroke="#c3ea9a" stroke-width=".9" fill="none"/><circle cx="75" cy="12" r="10" fill="#ec7063"/><path d="M71.6 8.6 L78.4 15.4 M78.4 8.6 L71.6 15.4" stroke="#fff" stroke-width="1.9" stroke-linecap="round"/></svg></td></tr>
      <tr class="odd v"><td>3853</td><td>CP00000013P001-001</td><td>CLIENTE C</td><td>04/09/2018</td><td class="r">11,00</td><td class="r">11,16</td><td></td><td class="r">0,00</td><td class="a"><svg class="act" viewBox="0 0 90 24"><g transform="translate(3.1 21.7) rotate(-44)"><path d="M0 0 L4 -1 V1 Z" fill="#444"/><path d="M4 -1 L7.4 -3.1 V3.1 L4 1 Z" fill="#f0dcc0"/><rect x="7.4" y="-3.1" width="12.8" height="3.1" fill="#f2a324"/><rect x="7.4" y="0" width="12.8" height="3.1" fill="#e0901f"/><path d="M20.2 -3.1 H24.4 Q25.6 -3.1 25.6 -1.9 V0 H20.2 Z" fill="#d9513f"/><path d="M20.2 0 H25.6 V1.9 Q25.6 3.1 24.4 3.1 H20.2 Z" fill="#b2413a"/></g><rect x="34.4" y="2.7" width="12.4" height="18" rx="1.4" fill="#fff" stroke="#f0b070" stroke-width="1"/><rect x="36" y="4.8" width="1.3" height="2.6" fill="#58b058"/><rect x="38.2" y="4.8" width="1.9" height="2.6" fill="#e45050"/><rect x="36" y="7.9" width="4" height=".9" fill="#ddd"/><ellipse cx="44.7" cy="9.8" rx="1.4" ry="2.7" fill="#8a8a8a"/><rect x="35.7" y="12.4" width="9.8" height="1.5" fill="#777"/><rect x="35.7" y="14.3" width="9.8" height="1.7" fill="#c4c4c4"/><rect x="35.7" y="16.3" width="9.8" height="1.4" fill="#555"/><path d="M46.8 5.6 Q51.6 5.8 52.8 11 Q53.6 15.6 52.8 21.6 L49.8 19.6 L47.6 21.4 L47.8 15.4 Q49.8 15.6 50.2 12.6 Q50.2 9 46.8 8 Z" fill="#62c41a"/><path d="M48.4 8.4 Q50.8 9.8 50.6 12.8" stroke="#c3ea9a" stroke-width=".9" fill="none"/><circle cx="75" cy="12" r="10" fill="#ec7063"/><path d="M71.6 8.6 L78.4 15.4 M78.4 8.6 L71.6 15.4" stroke="#fff" stroke-width="1.9" stroke-linecap="round"/></svg></td></tr>
      <tr class="even v"><td>3854</td><td>CP00000016P001-001</td><td>CLIENTE C</td><td>04/09/2018</td><td class="r">11,00</td><td class="r">11,16</td><td></td><td class="r">0,00</td><td class="a"><svg class="act" viewBox="0 0 90 24"><g transform="translate(3.1 21.7) rotate(-44)"><path d="M0 0 L4 -1 V1 Z" fill="#444"/><path d="M4 -1 L7.4 -3.1 V3.1 L4 1 Z" fill="#f0dcc0"/><rect x="7.4" y="-3.1" width="12.8" height="3.1" fill="#f2a324"/><rect x="7.4" y="0" width="12.8" height="3.1" fill="#e0901f"/><path d="M20.2 -3.1 H24.4 Q25.6 -3.1 25.6 -1.9 V0 H20.2 Z" fill="#d9513f"/><path d="M20.2 0 H25.6 V1.9 Q25.6 3.1 24.4 3.1 H20.2 Z" fill="#b2413a"/></g><rect x="34.4" y="2.7" width="12.4" height="18" rx="1.4" fill="#fff" stroke="#f0b070" stroke-width="1"/><rect x="36" y="4.8" width="1.3" height="2.6" fill="#58b058"/><rect x="38.2" y="4.8" width="1.9" height="2.6" fill="#e45050"/><rect x="36" y="7.9" width="4" height=".9" fill="#ddd"/><ellipse cx="44.7" cy="9.8" rx="1.4" ry="2.7" fill="#8a8a8a"/><rect x="35.7" y="12.4" width="9.8" height="1.5" fill="#777"/><rect x="35.7" y="14.3" width="9.8" height="1.7" fill="#c4c4c4"/><rect x="35.7" y="16.3" width="9.8" height="1.4" fill="#555"/><path d="M46.8 5.6 Q51.6 5.8 52.8 11 Q53.6 15.6 52.8 21.6 L49.8 19.6 L47.6 21.4 L47.8 15.4 Q49.8 15.6 50.2 12.6 Q50.2 9 46.8 8 Z" fill="#62c41a"/><path d="M48.4 8.4 Q50.8 9.8 50.6 12.8" stroke="#c3ea9a" stroke-width=".9" fill="none"/><circle cx="75" cy="12" r="10" fill="#ec7063"/><path d="M71.6 8.6 L78.4 15.4 M78.4 8.6 L71.6 15.4" stroke="#fff" stroke-width="1.9" stroke-linecap="round"/></svg></td></tr>
      <tr class="odd v"><td>3860</td><td>CP00000025P001-005</td><td>CLIENTE A</td><td>04/09/2018</td><td class="r">264,00</td><td class="r">267,72</td><td></td><td class="r">0,00</td><td class="a"><svg class="act" viewBox="0 0 90 24"><g transform="translate(3.1 21.7) rotate(-44)"><path d="M0 0 L4 -1 V1 Z" fill="#444"/><path d="M4 -1 L7.4 -3.1 V3.1 L4 1 Z" fill="#f0dcc0"/><rect x="7.4" y="-3.1" width="12.8" height="3.1" fill="#f2a324"/><rect x="7.4" y="0" width="12.8" height="3.1" fill="#e0901f"/><path d="M20.2 -3.1 H24.4 Q25.6 -3.1 25.6 -1.9 V0 H20.2 Z" fill="#d9513f"/><path d="M20.2 0 H25.6 V1.9 Q25.6 3.1 24.4 3.1 H20.2 Z" fill="#b2413a"/></g><rect x="34.4" y="2.7" width="12.4" height="18" rx="1.4" fill="#fff" stroke="#f0b070" stroke-width="1"/><rect x="36" y="4.8" width="1.3" height="2.6" fill="#58b058"/><rect x="38.2" y="4.8" width="1.9" height="2.6" fill="#e45050"/><rect x="36" y="7.9" width="4" height=".9" fill="#ddd"/><ellipse cx="44.7" cy="9.8" rx="1.4" ry="2.7" fill="#8a8a8a"/><rect x="35.7" y="12.4" width="9.8" height="1.5" fill="#777"/><rect x="35.7" y="14.3" width="9.8" height="1.7" fill="#c4c4c4"/><rect x="35.7" y="16.3" width="9.8" height="1.4" fill="#555"/><path d="M46.8 5.6 Q51.6 5.8 52.8 11 Q53.6 15.6 52.8 21.6 L49.8 19.6 L47.6 21.4 L47.8 15.4 Q49.8 15.6 50.2 12.6 Q50.2 9 46.8 8 Z" fill="#62c41a"/><path d="M48.4 8.4 Q50.8 9.8 50.6 12.8" stroke="#c3ea9a" stroke-width=".9" fill="none"/><circle cx="75" cy="12" r="10" fill="#ec7063"/><path d="M71.6 8.6 L78.4 15.4 M78.4 8.6 L71.6 15.4" stroke="#fff" stroke-width="1.9" stroke-linecap="round"/></svg></td></tr>
      <tr class="even v"><td>3858</td><td>CP00000020P001-001</td><td>CLIENTE C</td><td>04/09/2018</td><td class="r">11,00</td><td class="r">11,16</td><td></td><td class="r">0,00</td><td class="a"><svg class="act" viewBox="0 0 90 24"><g transform="translate(3.1 21.7) rotate(-44)"><path d="M0 0 L4 -1 V1 Z" fill="#444"/><path d="M4 -1 L7.4 -3.1 V3.1 L4 1 Z" fill="#f0dcc0"/><rect x="7.4" y="-3.1" width="12.8" height="3.1" fill="#f2a324"/><rect x="7.4" y="0" width="12.8" height="3.1" fill="#e0901f"/><path d="M20.2 -3.1 H24.4 Q25.6 -3.1 25.6 -1.9 V0 H20.2 Z" fill="#d9513f"/><path d="M20.2 0 H25.6 V1.9 Q25.6 3.1 24.4 3.1 H20.2 Z" fill="#b2413a"/></g><rect x="34.4" y="2.7" width="12.4" height="18" rx="1.4" fill="#fff" stroke="#f0b070" stroke-width="1"/><rect x="36" y="4.8" width="1.3" height="2.6" fill="#58b058"/><rect x="38.2" y="4.8" width="1.9" height="2.6" fill="#e45050"/><rect x="36" y="7.9" width="4" height=".9" fill="#ddd"/><ellipse cx="44.7" cy="9.8" rx="1.4" ry="2.7" fill="#8a8a8a"/><rect x="35.7" y="12.4" width="9.8" height="1.5" fill="#777"/><rect x="35.7" y="14.3" width="9.8" height="1.7" fill="#c4c4c4"/><rect x="35.7" y="16.3" width="9.8" height="1.4" fill="#555"/><path d="M46.8 5.6 Q51.6 5.8 52.8 11 Q53.6 15.6 52.8 21.6 L49.8 19.6 L47.6 21.4 L47.8 15.4 Q49.8 15.6 50.2 12.6 Q50.2 9 46.8 8 Z" fill="#62c41a"/><path d="M48.4 8.4 Q50.8 9.8 50.6 12.8" stroke="#c3ea9a" stroke-width=".9" fill="none"/><circle cx="75" cy="12" r="10" fill="#ec7063"/><path d="M71.6 8.6 L78.4 15.4 M78.4 8.6 L71.6 15.4" stroke="#fff" stroke-width="1.9" stroke-linecap="round"/></svg></td></tr>
    </tbody>
  </table>

  <div id="info" class="gray">Mostrando do 1 ao 8 de 8 registros</div>

  <div class="pg" style="left:1074px;width:29px"><svg viewBox="0 0 27 22" style="display:block;width:27px;height:22px"><path d="M5.6 3.6 H8.8 V18.4 H5.6 Z M21.4 3.6 V18.4 L9 11 Z" fill="#000"/></svg></div>
  <div class="pg" style="left:1109px;width:29px"><svg viewBox="0 0 27 22" style="display:block;width:27px;height:22px"><path d="M19.6 3.6 V18.4 L7.2 11 Z" fill="#000"/></svg></div>
  <div class="pg cur" style="left:1144px;width:22px">1</div>
  <div class="pg" style="left:1172px;width:29px"><svg viewBox="0 0 27 22" style="display:block;width:27px;height:22px"><path d="M7.4 3.6 V18.4 L19.8 11 Z" fill="#000"/></svg></div>
  <div class="pg" style="left:1207px;width:29px"><svg viewBox="0 0 27 22" style="display:block;width:27px;height:22px"><path d="M18.2 3.6 H21.4 V18.4 H18.2 Z M5.6 3.6 V18.4 L18 11 Z" fill="#000"/></svg></div>
</div>

<div id="flogo"><svg viewBox="0 0 40 32"><path d="M19.2 3 L28.8 11.8 L19.8 20.9 L10.4 12.4 Z" fill="#ffdb55"/><path d="M14.6 8.6 Q14.6 14.4 19.6 14.6 Q24.4 14.2 24.6 10.4 Q24.4 7.2 21.6 7.2 Q19.8 7.4 19.6 9" fill="none" stroke="#fff" stroke-width="1.1" stroke-linecap="round"/><path d="M19.6 8.2 L19.7 19" stroke="#fff" stroke-width="1.1" stroke-linecap="round"/><text x="3.4" y="28.3" font-family="Liberation Sans, sans-serif" font-size="7" textLength="32.8" lengthAdjust="spacingAndGlyphs"><tspan fill="#b5501a">FI</tspan><tspan fill="#4d4d4d">DIAS</tspan></text></svg></div>
<div id="footer" class="ft">
  <b>Pegasus Comercial - Todos os direitos reservados à <a href="#">Fidias</a></b><br>
  <b><a href="#">Versão @@version</a></b>
</div>
<div id="footer2" class="ft">
  Icons made by <a href="#">Freepik</a> from <a href="#">www.flaticon.com</a><br>
  is licensed by <a href="#">CC 3.0 BY</a>
</div>

</body>
</html>
